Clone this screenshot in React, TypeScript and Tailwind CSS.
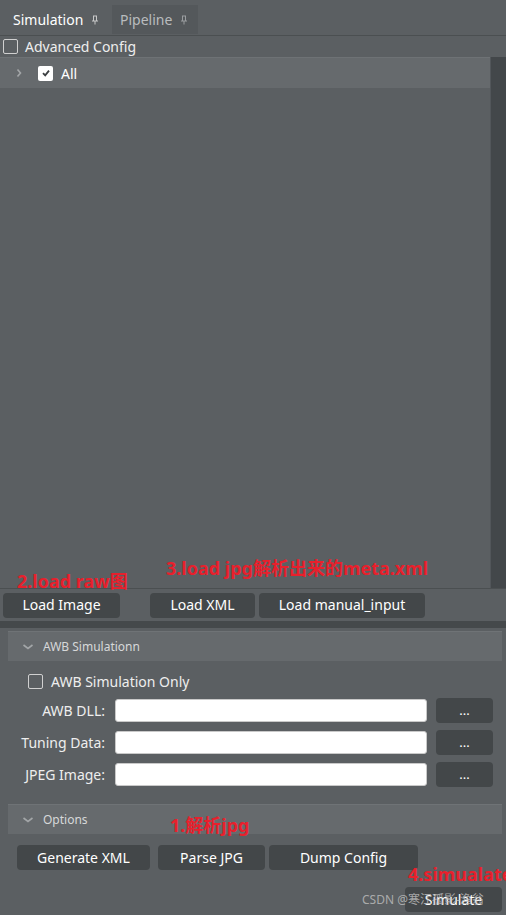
import React from "react";

const font = { fontFamily: '"Noto Sans", "Noto Sans CJK SC", sans-serif' };

const Btn = ({ label, className = "" }: { label: string; className?: string }) => (
  <button
    className={`h-[25px] rounded-[4px] bg-[#434749] text-[14px] leading-none text-white ${className}`}
  >
    {label}
  </button>
);

const Chevron = ({ down }: { down?: boolean }) => (
  <svg width="12" height="12" viewBox="0 0 12 12" className="shrink-0">
    {down ? (
      <path d="M1.5 4 L6 7.5 L10.5 4" fill="none" stroke="#a3a6a8" strokeWidth="1.6" />
    ) : (
      <path d="M4.5 2.5 L7.5 6 L4.5 9.5" fill="none" stroke="#a3a6a8" strokeWidth="1.6" />
    )}
  </svg>
);

const PinIcon = ({ color }: { color: string }) => (
  <svg width="8" height="10" viewBox="0 0 8 10" className="ml-2">
    <path d="M2 1 H6 M2.5 1 V6 M5.5 1 V6 M1 6 H7 M4 6 V9.5" fill="none" stroke={color} strokeWidth="1" />
  </svg>
);

const GroupHeader = ({ label }: { label: string }) => (
  <div className="ml-2 mr-[4px] flex h-[30px] items-center gap-[9px] border-t border-[#6f7376] bg-[#666a6d] pl-[14px] text-[12px] text-[#d6d8d9]">
    <Chevron down />
    <span>{label}</span>
  </div>
);

const FileRow = ({ label }: { label: string }) => (
  <div className="flex h-[24px] items-center">
    <span className="w-[105px] text-right text-[14px] text-[#eeeeee]">{label}</span>
    <div className="ml-[10px] h-[23px] w-[312px] rounded-[3px] border border-[#c9c9c9] bg-white" />
    <button className="ml-[9px] h-[25px] w-[57px] rounded-[4px] bg-[#434749] text-[13px] leading-none text-white">
      ...
    </button>
  </div>
);

const Note = ({ text, className }: { text: string; className: string }) => (
  <span
    className={`absolute whitespace-nowrap text-[18px] font-bold leading-none text-[#e8202c] ${className}`}
  >
    {text}
  </span>
);

export default function App() {
  return (
    <div className="relative h-[915px] w-[506px] overflow-hidden bg-[#5b5f62]" style={font}>
      {/* tabs */}
      <div className="flex h-[36px] items-end border-b border-[#4b4f51]">
        <div className="mb-[1px] flex h-[29px] w-[110px] items-center pl-[13px] text-[14px] text-white">
          Simulation
          <PinIcon color="#c8c8c8" />
        </div>
        <div className="mb-[1px] ml-[2px] flex h-[29px] w-[86px] items-center bg-[#54585b] pl-[8px] text-[14px] text-[#b9bcbe]">
          Pipeline
          <PinIcon color="#9a9da0" />
        </div>
      </div>

      {/* advanced config */}
      <div className="flex h-[21px] items-center pl-[3px] text-[14px] text-[#eeeeee]">
        <div className="h-[15px] w-[15px] rounded-[2px] border border-[#d0d0d0]" />
        <span className="ml-[7px]">Advanced Config</span>
      </div>

      {/* tree */}
      <div className="flex h-[531px]">
        <div className="flex-1">
          <div className="flex h-[31px] items-center border-t border-[#6e7275] bg-[#666a6d] pl-[13px]">
            <Chevron />
            <div className="ml-[13px] flex h-[15px] w-[15px] items-center justify-center rounded-[2px] bg-white">
              <svg width="10" height="10" viewBox="0 0 10 10">
                <path d="M2 5.2 L4.2 7.4 L8 2.6" fill="none" stroke="#3c3f41" strokeWidth="1.8" />
              </svg>
            </div>
            <span className="ml-[8px] text-[14px] text-white">All</span>
          </div>
        </div>
        <div className="w-[16px] border-l border-[#52565a] bg-[#43474a]" />
      </div>

      {/* load buttons */}
      <div className="flex h-[33px] items-center border-t border-[#4b4f51] pl-[3px]">
        <Btn label="Load Image" className="w-[117px]" />
        <Btn label="Load XML" className="ml-[30px] w-[105px]" />
        <Btn label="Load manual_input" className="ml-[4px] w-[166px]" />
      </div>

      {/* splitter */}
      <div className="h-[7px] bg-[#45494b]" />

      {/* lower panel */}
      <div className="pt-[3px]">
        <GroupHeader label="AWB Simulationn" />
        <div className="mt-[10px] flex h-[20px] items-center pl-[28px] text-[14px] text-[#eeeeee]">
          <div className="h-[15px] w-[15px] rounded-[2px] border border-[#d0d0d0]" />
          <span className="ml-[8px]">AWB Simulation Only</span>
        </div>
        <div className="mt-[7px] flex flex-col gap-[8px]">
          <FileRow label="AWB DLL:" />
          <FileRow label="Tuning Data:" />
          <FileRow label="JPEG Image:" />
        </div>
        <div className="mt-[18px]">
          <GroupHeader label="Options" />
        </div>
        <div className="mt-[11px] flex pl-[17px]">
          <Btn label="Generate XML" className="w-[133px]" />
          <Btn label="Parse JPG" className="ml-[8px] w-[107px]" />
          <Btn label="Dump Config" className="ml-[4px] w-[149px]" />
        </div>
        <div className="mt-[17px] flex justify-end pr-[4px]">
          <Btn label="Simulate" className="h-[24px] w-[97px]" />
        </div>
      </div>

      {/* annotations */}
      <Note text="2.load raw图" className="left-[17px] top-[572px]" />
      <Note text="3.load jpg解析出来的meta.xml" className="left-[166px] top-[559px]" />
      <Note text="1.解析jpg" className="left-[170px] top-[816px]" />
      <Note text="4.simualate" className="left-[408px] top-[865px]" />
      <span className="absolute left-[362px] top-[891px] whitespace-nowrap text-[12px] text-[#c0c0c0]/80">
        CSDN @寒江孤影-渔翁
      </span>
    </div>
  );
}
